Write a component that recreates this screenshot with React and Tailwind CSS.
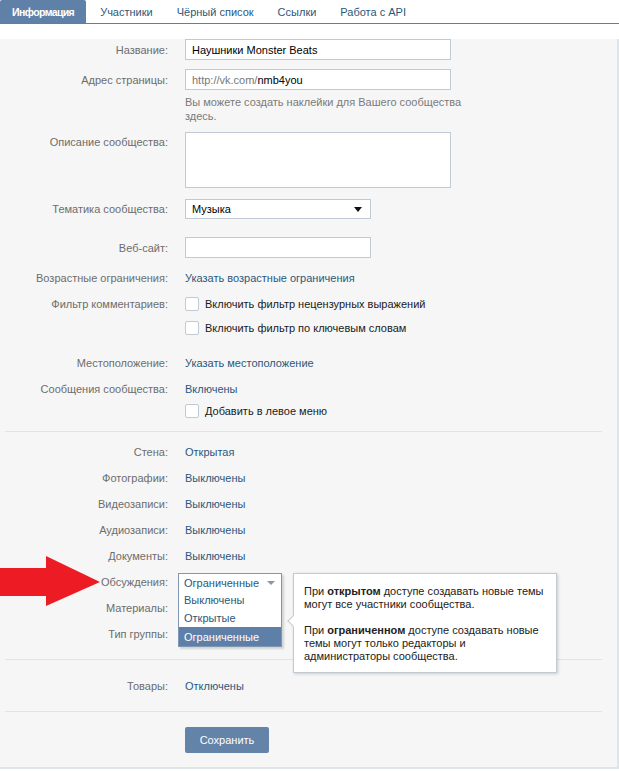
import React from "react";

function Row({ label, children, className = "", labelClass = "" }) {
  return (
    <div className={"flex " + className}>
      <div className={"w-[168px] shrink-0 text-right text-[#6d6d6d] " + labelClass}>{label}</div>
      <div className="ml-[17px] flex-1 min-w-0 relative">{children}</div>
    </div>
  );
}

function Check({ text }) {
  return (
    <div className="flex items-center gap-[6px] text-[#1a1a1a]">
      <span className="inline-block w-[14px] h-[14px] bg-white border border-[#c0cad5] rounded-[2px]" />
      <span>{text}</span>
    </div>
  );
}

function Tab({ children, active }) {
  return active ? (
    <div className="h-[23px] px-[12px] flex items-center bg-[#5f81a8] text-white font-bold tracking-[-0.6px] text-[10.5px] rounded-t-[2px]">
      {children}
    </div>
  ) : (
    <div className="h-[23px] px-[12px] flex items-center text-[#2b587a]">{children}</div>
  );
}

const v = "text-[#2b587a]";

export default function App() {
  return (
    <div className="relative w-[619px] font-['Liberation_Sans',Arial,sans-serif] text-[11px] leading-[14px]">
      <div className="flex h-[24px] bg-white border-b border-[#5d7fa6] w-[619px]">
        <Tab active>Информация</Tab>
        <div className="w-[2px]" />
        <Tab>Участники</Tab>
        <Tab>Чёрный список</Tab>
        <Tab>Ссылки</Tab>
        <Tab>Работа с API</Tab>
      </div>

      <div className="bg-[#f6f6f6] border-r-2 border-b-2 border-[#e0e5ea] pb-[14px]">
        <Row label="Название:" className="mt-[15px] h-[21px] items-center">
          <div className="w-[266px] h-[21px] bg-white border border-[#c0cad5] px-[6px] flex items-center text-black">
            Наушники Monster Beats
          </div>
        </Row>
        <Row label="Адрес страницы:" className="mt-[9px] h-[21px] items-center">
          <div className="w-[266px] h-[21px] bg-white border border-[#c0cad5] px-[6px] flex items-center">
            <span className="text-[#777]">http://vk.com/</span>
            <span className="text-black">nmb4you</span>
          </div>
        </Row>
        <div className="mt-[5px] ml-[185px] w-[266px] text-[#7a7a7a] whitespace-nowrap">
          Вы можете создать наклейки для Вашего сообщества
          <br />
          здесь.
        </div>
        <Row label="Описание сообщества:" className="mt-[9px] items-start" labelClass="pt-[3px]">
          <div className="w-[266px] h-[56px] bg-white border border-[#c0cad5]" />
        </Row>
        <Row label="Тематика сообщества:" className="mt-[11px] h-[20px] items-center">
          <div className="w-[186px] h-[20px] bg-white border border-[#c0cad5] pl-[6px] pr-[8px] flex items-center justify-between text-black">
            <span>Музыка</span>
            <svg width="8" height="5" viewBox="0 0 8 5">
              <path d="M0 0h8L4 5z" fill="#111" />
            </svg>
          </div>
        </Row>
        <Row label="Веб-сайт:" className="mt-[18px] h-[21px] items-center">
          <div className="w-[186px] h-[21px] bg-white border border-[#c0cad5]" />
        </Row>
        <Row label="Возрастные ограничения:" className="mt-[13px] h-[14px] items-center">
          <span className={v}>Указать возрастные ограничения</span>
        </Row>
        <Row label="Фильтр комментариев:" className="mt-[12px] h-[14px] items-center">
          <Check text="Включить фильтр нецензурных выражений" />
        </Row>
        <Row label="" className="mt-[10px] h-[14px] items-center">
          <Check text="Включить фильтр по ключевым словам" />
        </Row>
        <Row label="Местоположение:" className="mt-[21px] h-[14px] items-center">
          <span className={v}>Указать местоположение</span>
        </Row>
        <Row label="Сообщения сообщества:" className="mt-[12px] h-[14px] items-center">
          <span className={v}>Включены</span>
        </Row>
        <Row label="" className="mt-[8px] h-[14px] items-center">
          <Check text="Добавить в левое меню" />
        </Row>

        <div className="mt-[13px] ml-[5px] w-[597px] h-px bg-[#e1e4e8]" />

        <Row label="Стена:" className="mt-[13px] h-[14px] items-center">
          <span className={v}>Открытая</span>
        </Row>
        <Row label="Фотографии:" className="mt-[12px] h-[14px] items-center">
          <span className={v}>Выключены</span>
        </Row>
        <Row label="Видеозаписи:" className="mt-[12px] h-[14px] items-center">
          <span className={v}>Выключены</span>
        </Row>
        <Row label="Аудиозаписи:" className="mt-[12px] h-[14px] items-center">
          <span className={v}>Выключены</span>
        </Row>
        <Row label="Документы:" className="mt-[12px] h-[14px] items-center">
          <span className={v}>Выключены</span>
        </Row>
        <Row label="Обсуждения:" className="mt-[12px] h-[14px] items-center relative z-10">
          <div className="absolute left-[-7px] top-[-9px] w-[104px] bg-white border border-[#7f97b3] shadow-[2px_2px_2px_rgba(0,0,0,0.15)]">
            <div className="h-[17px] pl-[5px] pr-[6px] flex items-center justify-between text-[#2b587a] bg-white">
              <span>Ограниченные</span>
              <svg width="8" height="4" viewBox="0 0 8 4">
                <path d="M0 0h8L4 4z" fill="#8596ad" />
              </svg>
            </div>
            <div className="h-[18px] pl-[5px] flex items-center text-[#2b587a]">Выключены</div>
            <div className="h-[18px] pl-[5px] flex items-center text-[#2b587a]">Открытые</div>
            <div className="h-[19px] pl-[5px] flex items-center text-white bg-[#5e7fa7]">Ограниченные</div>
          </div>
          <div className="absolute left-[108px] top-[-9px] w-[264px] bg-white border border-[#c3c9d0] shadow-[1px_1px_3px_rgba(0,0,0,0.18)] pl-[10px] pr-[8px] pt-[11px] pb-[9px] text-[#222] leading-[13px]">
            <div className="absolute left-[-5px] top-[43px] w-[8px] h-[8px] bg-white border-l border-b border-[#c3c9d0] rotate-45" />
            <div>
              При <b>открытом</b> доступе создавать новые темы
              <br />
              могут все участники сообщества.
            </div>
            <div className="mt-[13px]">
              При <b>ограниченном</b> доступе создавать новые
              <br />
              темы могут только редакторы и
              <br />
              администраторы сообщества.
            </div>
          </div>
        </Row>
        <Row label="Материалы:" className="mt-[12px] h-[14px] items-center" />
        <Row label="Тип группы:" className="mt-[12px] h-[14px] items-center" />

        <div className="mt-[18px] ml-[5px] w-[597px] h-px bg-[#e1e4e8]" />

        <Row label="Товары:" className="mt-[19px] h-[14px] items-center">
          <span className={v}>Отключены</span>
        </Row>

        <div className="mt-[18px] ml-[5px] w-[597px] h-px bg-[#e1e4e8]" />

        <div className="mt-[15px] ml-[185px] w-[84px] h-[26px] bg-[#6383a8] rounded-[2px] text-white flex items-center justify-center">
          Сохранить
        </div>
      </div>

      <svg className="absolute left-0 top-[555px] z-20" width="102" height="52" viewBox="0 0 102 52">
        <path d="M0 13H46V1L100 27L46 51V41H0Z" fill="#ed1c24" />
      </svg>
    </div>
  );
}
